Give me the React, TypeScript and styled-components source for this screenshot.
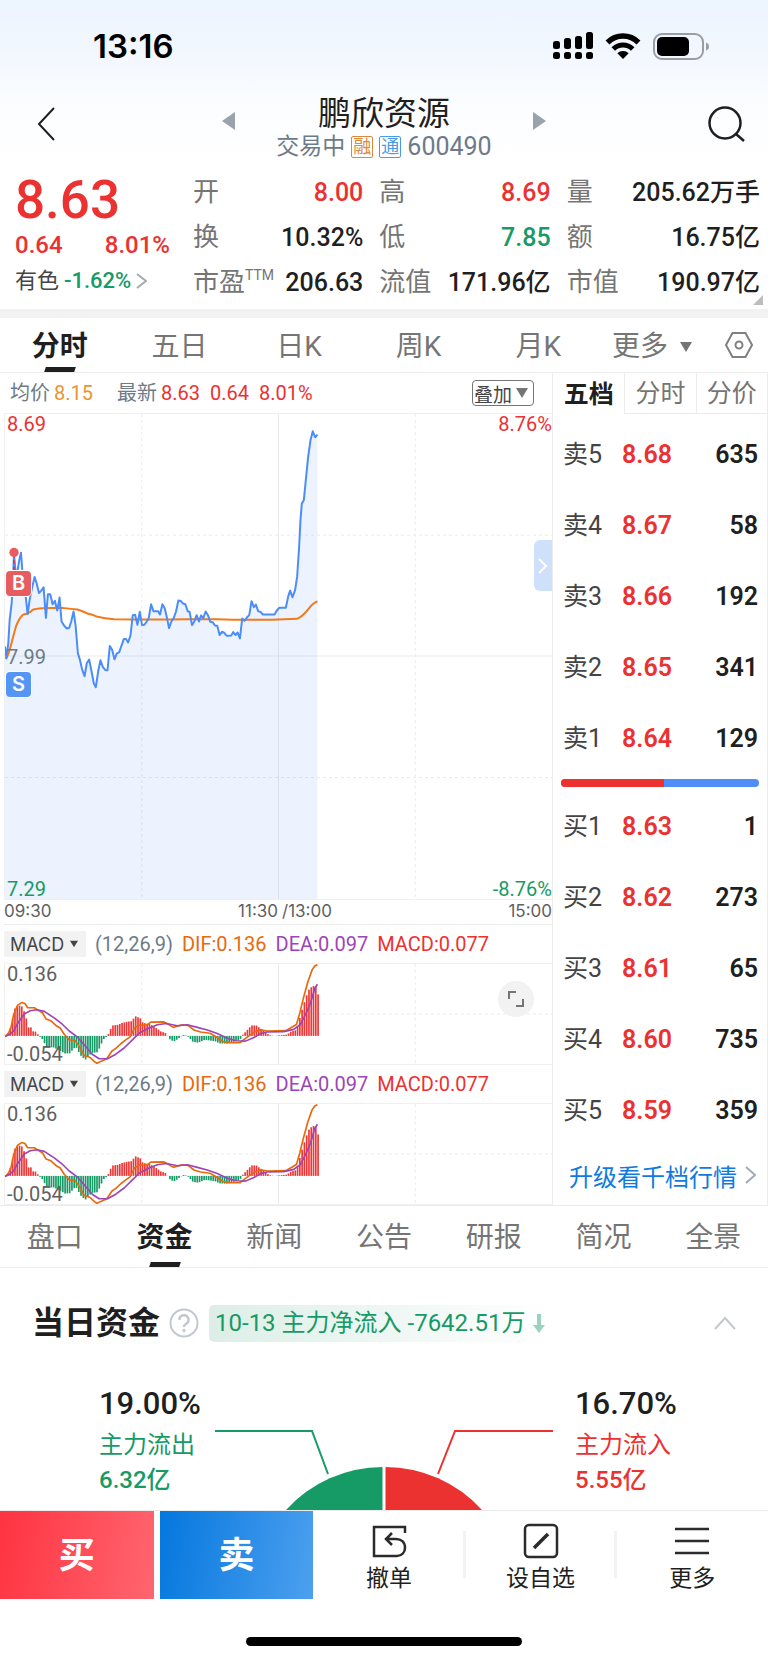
import React from 'react';
import styled, { createGlobalStyle, css } from 'styled-components';

const color = {
  ink: '#1f1f1f',
  text: '#444444',
  muted: '#757575',
  slate: '#6d7b88',
  red: '#ec3131',
  green: '#169a66',
  blue: '#0f7be0',
  line: '#ececec',
};

const tones = { ink: color.ink, red: color.red, green: color.green };
type Tone = keyof typeof tones;

const Global = createGlobalStyle`
  *, *::before, *::after { box-sizing: border-box; }
  body {
    margin: 0;
    background: #fff;
    color: ${color.ink};
    font-family: Roboto, "Noto Sans CJK SC", sans-serif;
  }
  h1, h2, p, dl, dd { margin: 0; font-weight: 400; }
  button, select {
    margin: 0;
    padding: 0;
    border: 0;
    background: none;
    color: inherit;
    font: inherit;
    cursor: pointer;
  }
  a { color: inherit; text-decoration: none; }
  svg { display: block; flex: none; }
`;

const Page = styled.div`
  width: 100%;
  overflow: hidden;
`;

/* ---------- status bar and header ---------- */

const Top = styled.div`
  background: linear-gradient(#edf5fe 0, #f2f7fe 50px, #fcfdff 110px, #fff 160px);
`;

const StatusBar = styled.div`
  display: flex;
  align-items: center;
  justify-content: space-between;
  height: 92px;
  padding: 0 58px 0 93px;
  color: #000;
`;

const Clock = styled.time`
  font: 600 33px/40px Inter, sans-serif;
`;

const StatusIcons = styled.div`
  display: flex;
  align-items: center;
  gap: 12px;
`;

const Header = styled.header`
  display: grid;
  grid-template-columns: 1fr 324px 1fr;
  align-items: center;
  padding: 0 22px 8px;
`;

const IconButton = styled.button<{ $end?: boolean }>`
  display: flex;
  align-items: center;
  justify-content: center;
  width: ${(p) => (p.$end ? 38 : 48)}px;
  height: 48px;
  padding-bottom: 4px;
  justify-self: ${(p) => (p.$end ? 'end' : 'start')};
`;

const Switcher = styled.div`
  display: flex;
  align-items: center;
  justify-content: space-between;
`;

const StepButton = styled.button`
  padding-bottom: 10px;
`;

const TitleBlock = styled.div`
  display: flex;
  flex-direction: column;
  align-items: center;
  padding-top: 2px;
`;

const StockName = styled.h1`
  font-size: 33px;
  line-height: 40px;
`;

const StockMeta = styled.p`
  display: flex;
  align-items: center;
  gap: 6px;
  font-size: 25px;
  line-height: 26px;
  color: ${color.slate};
`;

const State = styled.span`
  font-size: 23px;
`;

const Badge = styled.span<{ $color: string }>`
  width: 22px;
  height: 22px;
  border: 1px solid ${(p) => p.$color};
  border-radius: 2px;
  background: #fff;
  color: ${(p) => p.$color};
  font-size: 18px;
  line-height: 19px;
  text-align: center;
`;

/* ---------- quote ---------- */

const Quote = styled.section`
  position: relative;
  display: flex;
  padding: 0 8px 4px 15px;
  border-bottom: 9px solid #f2f2f2;
`;

const Latest = styled.div`
  width: 178px;
  padding-top: 2px;
`;

const Price = styled.p`
  font-size: 53px;
  font-weight: 500;
  line-height: 60px;
  color: ${color.red};
`;

const Change = styled.p`
  display: flex;
  justify-content: space-between;
  width: 155px;
  font-size: 24px;
  font-weight: 500;
  line-height: 30px;
  color: ${color.red};
`;

const Sector = styled.a`
  display: flex;
  align-items: center;
  gap: 5px;
  height: 42px;
  font-size: 22px;
  line-height: 30px;
  color: ${color.text};
`;

const SectorChange = styled.span`
  font-weight: 500;
  color: ${color.green};
`;

const Stats = styled.dl`
  flex: 1;
  display: grid;
  grid-template-columns: 170fr 171fr 193fr;
  column-gap: 16px;
  padding-top: 2px;
`;

const Stat = styled.div`
  display: flex;
  justify-content: space-between;
  height: 45px;
  font-size: 25px;
  line-height: 45px;
  white-space: nowrap;
`;

const StatLabel = styled.dt`
  display: flex;
  font-size: 26px;
  color: ${color.muted};
`;

const Superscript = styled.small`
  font-size: 14px;
  line-height: 30px;
`;

const StatValue = styled.dd<{ $tone: Tone }>`
  font-weight: 500;
  color: ${(p) => tones[p.$tone]};
`;

const Corner = styled.svg`
  position: absolute;
  right: 5px;
  bottom: 4px;
`;

/* ---------- tab strips ---------- */

const TabStrip = styled.nav`
  display: flex;
  border-bottom: 1px solid ${color.line};
`;

const Tab = styled.button<{ $active?: boolean; $tall?: boolean }>`
  position: relative;
  flex: 1 1 0;
  height: ${(p) => (p.$tall ? 61 : 54)}px;
  padding-top: ${(p) => (p.$tall ? 2 : 4)}px;
  font-size: 28px;
  line-height: 40px;
  color: ${color.muted};
  ${(p) =>
    p.$active &&
    css`
      color: ${color.ink};
      font-weight: 700;
      &::after {
        content: '';
        position: absolute;
        left: 50%;
        bottom: 0;
        width: 30px;
        height: 5px;
        margin-left: -15px;
        background: ${color.ink};
        transform: skewX(-18deg);
      }
    `}
`;

const MoreTab = styled(Tab)`
  display: flex;
  flex: 0 0 112px;
  align-items: center;
  gap: 12px;
  padding-left: 14px;
`;

const SettingsButton = styled(IconButton)`
  width: 58px;
  height: 54px;
  padding-bottom: 0;
`;

/* ---------- chart panel ---------- */

const Market = styled.section`
  display: flex;
  border-bottom: 1px solid ${color.line};
`;

const Charts = styled.div`
  position: relative;
  flex: 1;
  min-width: 0;
  padding-left: 4px;
`;

const InfoRow = styled.div`
  display: flex;
  align-items: center;
  height: 40px;
  padding: 0 18px 0 6px;
  gap: 10px;
  font-size: 20px;
  line-height: 30px;
  color: ${color.red};
`;

const InfoGroup = styled.span<{ $color?: string }>`
  display: flex;
  gap: 4px;
  margin-right: ${(p) => (p.$color ? 14 : 0)}px;
  color: ${(p) => p.$color ?? 'inherit'};
`;

const InfoLabel = styled.span`
  color: ${color.slate};
`;

const SelectBox = styled.span<{ $outlined?: boolean }>`
  position: relative;
  display: flex;
  align-items: center;
  flex: none;
  width: ${(p) => (p.$outlined ? 62 : 82)}px;
  height: 26px;
  margin-left: ${(p) => (p.$outlined ? 'auto' : 0)};
  border: ${(p) => (p.$outlined ? `1px solid ${color.muted}` : 0)};
  border-radius: ${(p) => (p.$outlined ? 4 : 0)}px;
  background: ${(p) => (p.$outlined ? '#fff' : '#f2f2f2')};
  color: ${color.text};
  svg {
    position: absolute;
    right: ${(p) => (p.$outlined ? 5 : 8)}px;
    pointer-events: none;
  }
`;

const Select = styled.select<{ $latin?: boolean }>`
  appearance: none;
  width: 100%;
  height: 100%;
  padding-left: ${(p) => (p.$latin ? 6 : 1)}px;
  font-family: ${(p) => (p.$latin ? 'Inter, sans-serif' : 'inherit')};
  font-size: ${(p) => (p.$latin ? 18 : 19)}px;
`;

const Plot = styled.div<{ $height: number }>`
  position: relative;
  height: ${(p) => p.$height}px;
  border: solid #f0f0f0;
  border-width: 1px 0 1px 1px;
  > svg {
    width: 100%;
    height: 100%;
  }
`;

const AxisLabel = styled.span<{ $place: 'tl' | 'tr' | 'ml' | 'bl' | 'br'; $color?: string }>`
  position: absolute;
  font-size: 20px;
  line-height: 20px;
  color: ${(p) => p.$color ?? '#606060'};
  ${(p) => (p.$place[1] === 'l' ? 'left: 2px;' : 'right: 0;')}
  ${(p) => ({ t: 'top: 0;', m: 'top: 50%; margin-top: -10px;', b: 'bottom: 0;' })[p.$place[0] as 't' | 'm' | 'b']}
`;

const TradeMark = styled.span<{ $buy?: boolean }>`
  position: absolute;
  left: 1px;
  top: ${(p) => (p.$buy ? 157 : 258)}px;
  width: 25px;
  height: 25px;
  border-radius: 4px;
  box-shadow: 0 0 0 1px #fff;
  background: ${(p) => (p.$buy ? '#e65c60' : '#5596f5')};
  color: #fff;
  font: 600 20px/25px Inter, sans-serif;
  text-align: center;
`;

const SideHandle = styled.button`
  position: absolute;
  right: 0;
  top: 126px;
  display: flex;
  align-items: center;
  justify-content: center;
  width: 18px;
  height: 51px;
  border-radius: 6px 0 0 6px;
  background: #cfe0fb;
`;

const TimeAxis = styled.div`
  display: grid;
  grid-template-columns: 1fr 1fr;
  height: 25px;
  border-bottom: 1px solid ${color.line};
  font: 17px/23px Inter, sans-serif;
  color: #606060;
`;

const Session = styled.div`
  display: flex;
  justify-content: space-between;
  &:last-child {
    padding-left: 4px;
  }
`;

const IndicatorRow = styled.div`
  display: flex;
  align-items: center;
  gap: 9px;
  height: 38px;
  font-size: 20px;
  white-space: nowrap;
`;

const Reading = styled.span<{ $color: string }>`
  color: ${(p) => p.$color};
`;

const ExpandButton = styled.button`
  position: absolute;
  right: 18px;
  top: 17px;
  display: flex;
  align-items: center;
  justify-content: center;
  width: 36px;
  height: 36px;
  border-radius: 50%;
  background: #f2f2f2;
`;

/* ---------- order book ---------- */

const Book = styled.aside`
  width: 216px;
  flex: none;
  border: solid ${color.line};
  border-width: 0 1px;
`;

const BookTabs = styled.div`
  display: grid;
  grid-template-columns: 1fr 1fr 1fr;
  height: 41px;
  margin-bottom: 5px;
`;

const BookTab = styled.button<{ $active?: boolean }>`
  padding-top: 2px;
  font-size: 25px;
  line-height: 36px;
  color: ${(p) => (p.$active ? color.ink : color.muted)};
  font-weight: ${(p) => (p.$active ? 700 : 400)};
  border: solid ${color.line};
  border-width: ${(p) => (p.$active ? 0 : '0 0 1px 1px')};
`;

const BookTable = styled.table`
  width: 100%;
  border-collapse: collapse;
  font-size: 25px;
  line-height: 36px;
`;

const Level = styled.th`
  width: 69px;
  height: 71px;
  padding: 0 0 0 10px;
  font-weight: 400;
  text-align: left;
  color: ${color.text};
`;

const BookPrice = styled.td`
  padding: 0;
  font-weight: 600;
  color: ${color.red};
`;

const Volume = styled.td`
  padding: 0 9px 0 0;
  font-weight: 600;
  text-align: right;
`;

const Balance = styled.div`
  display: flex;
  height: 8px;
  margin: 5px 8px 4px;
  border-radius: 4px;
  overflow: hidden;
  background: #4f8df9;
`;

const BalanceBuy = styled.span`
  width: 52%;
  background: ${color.red};
`;

const DepthLink = styled.a`
  display: flex;
  align-items: center;
  justify-content: space-between;
  height: 58px;
  padding: 0 11px 0 16px;
  font-size: 24px;
  white-space: nowrap;
  color: ${color.blue};
`;

/* ---------- funds ---------- */

const FundsHeader = styled.div`
  display: flex;
  align-items: center;
  height: 110px;
  padding: 0 32px 0 32px;
`;

const FundsTitle = styled.h2`
  margin-right: 9px;
  font-size: 32px;
  font-weight: 700;
  line-height: 40px;
`;

const FundsTag = styled.p`
  display: flex;
  align-items: center;
  gap: 8px;
  height: 37px;
  margin-left: 10px;
  padding: 0 6px;
  border-radius: 5px;
  background: linear-gradient(90deg, #dceee7, #fff);
  font-size: 24px;
  line-height: 32px;
  color: ${color.green};
`;

const Collapse = styled.button`
  margin-left: auto;
  padding: 10px 0;
`;

const Flow = styled.div`
  display: flex;
  justify-content: center;
  height: 132px;
  padding-top: 6px;
`;

const FlowSide = styled.div<{ $tone: Tone }>`
  width: 116px;
  color: ${(p) => tones[p.$tone]};
  font-size: 24px;
  line-height: 35px;
  white-space: nowrap;
  &:last-child {
    width: 94px;
    margin-left: 22px;
  }
`;

const FlowPercent = styled.p`
  font-size: 31px;
  font-weight: 500;
  line-height: 40px;
  color: ${color.ink};
  margin-bottom: 4px;
`;

const FlowAmount = styled.p`
  font-weight: 500;
`;

const FlowChart = styled.svg`
  align-self: flex-end;
`;

/* ---------- bottom bar ---------- */

const BottomBar = styled.footer`
  border-top: 1px solid ${color.line};
  background: #fff;
`;

const Actions = styled.div`
  display: flex;
  align-items: center;
  height: 88px;
`;

const TradeButton = styled.button<{ $sell?: boolean }>`
  width: 20%;
  height: 100%;
  margin-left: ${(p) => (p.$sell ? 6 : 0)}px;
  padding-top: 2px;
  background: ${(p) =>
    p.$sell ? 'linear-gradient(100deg, #0477de, #4da0ef)' : 'linear-gradient(100deg, #ff3341, #ff6670)'};
  color: #fff;
  font-size: 36px;
  font-weight: 700;
  line-height: 48px;
`;

const ActionButton = styled.button`
  position: relative;
  display: flex;
  flex: 1 1 0;
  flex-direction: column;
  align-items: center;
  gap: 3px;
  height: 100%;
  padding-top: 12px;
  font-size: 23px;
  line-height: 34px;
  & + &::before {
    content: '';
    position: absolute;
    left: -2px;
    top: 20px;
    width: 3px;
    height: 47px;
    background: #f2f2f2;
  }
`;

const HomeIndicator = styled.div`
  width: 36%;
  height: 9px;
  margin: 38px auto 15px;
  border-radius: 5px;
  background: #000;
`;

/* ---------- data ---------- */

type StatItem = { label: string; sup?: string; value: string; tone?: Tone };

const stats: StatItem[] = [
  { label: '开', value: '8.00', tone: 'red' },
  { label: '高', value: '8.69', tone: 'red' },
  { label: '量', value: '205.62万手' },
  { label: '换', value: '10.32%' },
  { label: '低', value: '7.85', tone: 'green' },
  { label: '额', value: '16.75亿' },
  { label: '市盈', sup: 'TTM', value: '206.63' },
  { label: '流值', value: '171.96亿' },
  { label: '市值', value: '190.97亿' },
];

const sells = [
  ['卖5', '8.68', '635'],
  ['卖4', '8.67', '58'],
  ['卖3', '8.66', '192'],
  ['卖2', '8.65', '341'],
  ['卖1', '8.64', '129'],
];

const buys = [
  ['买1', '8.63', '1'],
  ['买2', '8.62', '273'],
  ['买3', '8.61', '65'],
  ['买4', '8.60', '735'],
  ['买5', '8.59', '359'],
];

const pricePoints =
  '0,700 4,735 10,690 14,620 20,570 24,500 27,420 32,480 38,470 43,440 48,418 52,470 60,530 68,603 74,560 82,520 89,491 95,510 102,539 109,532 116,522 123,614 129,543 136,543 143,573 150,563 157,592 164,553 170,625 178,638 186,646 193,644 199,625 206,595 212,635 219,720 225,740 232,770 239,790 246,750 253,740 260,775 267,812 273,823 280,775 287,742 294,762 301,771 308,772 315,699 322,710 329,739 336,721 343,718 350,698 357,678 364,678 370,688 377,668 384,606 391,605 398,635 405,596 412,636 419,635 426,625 432,615 439,573 446,594 460,594 466,604 473,573 480,585 487,615 493,645 500,625 507,615 514,595 521,562 528,563 535,571 542,573 549,594 555,596 562,636 569,625 576,606 583,625 589,607 596,615 603,595 610,606 617,626 624,627 631,637 638,638 645,666 652,656 659,659 666,668 680,667 686,657 693,666 699,658 706,676 713,616 720,623 727,613 734,606 741,564 748,582 754,574 761,594 768,596 775,604 810,604 817,592 824,584 844,584 851,550 857,532 864,552 872,530 878,490 884,400 888,320 892,270 898,260 904,200 911,130 918,80 925,52 932,70 939,62';

const averagePath =
  'M2,738 C14,725 18,690 33,640 C40,622 46,612 54,605 C66,600 74,602 83,590 C100,584 145,584 173,584 Q200,588 218,589 Q232,594 248,601 Q262,604 278,611 Q300,616 328,618 L398,619 L488,619 L548,618 L638,618 L688,620 L800,620 L878,617 C895,611 905,597 918,580 Q930,567 939,565';

const barProfile: number[][] = [
  [0, 0], [10, 12], [18, 40], [26, 82], [33, 90], [46, 94], [54, 78], [61, 56], [68, 26], [76, 26], [82, 14],
  [90, 13], [98, 2], [104, -4], [112, -12], [122, -35], [143, -35], [163, -45], [178, -54], [194, -53],
  [203, -38], [212, -36], [225, -60], [239, -73], [258, -52], [276, -50], [286, -27], [294, -10], [306, 0],
  [314, 20], [322, 32], [338, 34], [350, 40], [368, 44], [376, 44], [390, 60], [404, 54], [412, 40], [433, 36],
  [446, 28], [458, 20], [468, 12], [478, 11], [486, 0], [496, -14], [508, -16], [524, -4], [533, 3], [543, 1],
  [550, -4], [562, -18], [578, -21], [598, -12], [628, -16], [643, -23], [668, -24], [688, -17], [704, -12],
  [712, 3], [722, 14], [738, 32], [753, 32], [766, 22], [773, 18], [783, 8], [794, 2], [808, 0], [823, 2],
  [846, 4], [854, 12], [873, 18], [880, 40], [888, 72], [898, 105], [906, 130], [913, 146], [925, 153],
  [932, 150], [939, 125],
];

const heightAt = (x: number) => {
  const next = barProfile.findIndex((p) => p[0] >= x);
  if (next < 1) return barProfile[0][1];
  const [x0, h0] = barProfile[next - 1];
  const [x1, h1] = barProfile[next];
  return h0 + ((h1 - h0) * (x - x0)) / (x1 - x0);
};

const macdBars = Array.from({ length: 138 }, (_, i) => {
  const x = i * 6.85;
  return { x, h: heightAt(x) };
});

const difPoints =
  '0,222 10,212 18,195 26,155 38,126 50,118 60,121 68,134 88,134 100,142 113,150 123,168 138,174 153,188 166,196 178,215 193,232 210,233 223,252 238,280 256,286 268,298 276,304 288,298 306,290 321,267 333,258 348,244 363,232 376,223 390,195 403,187 428,186 438,178 478,177 488,183 506,194 518,190 533,186 550,188 568,202 588,208 616,212 638,225 656,238 678,241 706,241 720,230 733,220 753,207 768,201 788,205 844,204 858,196 876,185 886,150 898,100 910,55 923,18 931,6 939,2';

const deaPoints =
  '0,222 13,216 26,205 38,182 58,153 76,143 96,140 118,145 148,165 173,185 193,205 216,222 238,247 263,277 283,290 308,290 333,276 358,257 383,232 403,212 428,198 458,186 485,182 518,189 548,186 578,194 608,202 638,213 668,227 693,235 723,236 748,225 768,213 788,208 838,207 868,200 888,185 903,155 918,120 931,75 939,62';

/* ---------- pieces ---------- */

const Grid = ({ height, rows }: { height: number; rows: number[] }) => (
  <g stroke="#ebebeb" strokeWidth="1">
    <path
      d={`M411,0V${height}M1233,0V${height}${rows.map((y) => `M0,${y}H1644`).join('')}`}
      strokeDasharray="3 3"
      vectorEffect="non-scaling-stroke"
    />
    <path d={`M822,0V${height}`} vectorEffect="non-scaling-stroke" />
  </g>
);

const Chevron = ({ stroke = '#a3abb5', d = 'M1 1 L10 9 L1 17', w = 11, h = 18 }) => (
  <svg width={w} height={h} fill="none" stroke={stroke} strokeWidth="2">
    <path d={d} />
  </svg>
);

const Down = ({ size = 12, fill = color.text }) => (
  <svg width={size} height={size} viewBox="0 0 12 12" fill={fill}>
    <path d="M0 1H12L6 11Z" />
  </svg>
);

const Levels = ({ rows, caption }: { rows: string[][]; caption: string }) => (
  <BookTable aria-label={caption}>
    <tbody>
      {rows.map(([level, price, volume]) => (
        <tr key={level}>
          <Level scope="row">{level}</Level>
          <BookPrice>{price}</BookPrice>
          <Volume>{volume}</Volume>
        </tr>
      ))}
    </tbody>
  </BookTable>
);

const Macd = ({ name, expandable }: { name: string; expandable?: boolean }) => (
  <>
    <IndicatorRow>
      <SelectBox>
        <Select $latin aria-label={name} defaultValue="MACD">
          <option>MACD</option>
        </Select>
        <Down size={8} />
      </SelectBox>
      <Reading $color={color.slate}>(12,26,9)</Reading>
      <Reading $color="#e8690b">DIF:0.136</Reading>
      <Reading $color="#9c45b8">DEA:0.097</Reading>
      <Reading $color={color.red}>MACD:0.077</Reading>
    </IndicatorRow>
    <Plot $height={102}>
      <svg viewBox="0 0 1644 306" preserveAspectRatio="none" fill="none">
        <Grid height={306} rows={[153]} />
        {macdBars.map(({ x, h }) => (
          <rect
            key={x}
            x={x}
            y={h > 0 ? 220 - h : 220}
            width="5"
            height={Math.abs(h)}
            fill={h > 0 ? '#ee3636' : '#169a66'}
          />
        ))}
        <polyline points={difPoints} stroke="#e8690b" strokeWidth="5" strokeLinejoin="round" />
        <polyline points={deaPoints} stroke="#9c45b8" strokeWidth="5" strokeLinejoin="round" />
      </svg>
      <AxisLabel $place="tl">0.136</AxisLabel>
      <AxisLabel $place="bl">-0.054</AxisLabel>
      {expandable && (
        <ExpandButton aria-label="全屏">
          <svg width="16" height="16" fill="none" stroke="#757575" strokeWidth="2">
            <path d="M1 8V1H8M15 8V15H8" />
          </svg>
        </ExpandButton>
      )}
    </Plot>
  </>
);

export default function App() {
  return (
    <Page>
      <Global />
      <Top>
        <StatusBar>
          <Clock>13:16</Clock>
          <StatusIcons>
            <svg width="40" height="28">
              {[8, 11, 13, 17].map((h, i) => (
                <g key={h}>
                  <rect x={i * 11} y={17 - h} width="7" height={h} rx="2.5" />
                  <rect x={i * 11} y="20" width="7" height="7" rx="2.5" />
                </g>
              ))}
            </svg>
            <svg width="36" height="27" fill="none" stroke="#000">
              <path d="M2.5 9.5A22 22 0 0 1 33.5 9.5" strokeWidth="5.5" />
              <path d="M8.3 16A13.7 13.7 0 0 1 27.7 16" strokeWidth="5" />
              <path d="M18 26L12.3 20.3A8 8 0 0 1 23.7 20.3Z" fill="#000" stroke="none" />
            </svg>
            <svg width="57" height="27" fill="none">
              <rect x="1" y="1" width="49" height="25" rx="8" stroke="#9a9ea3" strokeWidth="2" />
              <rect x="4" y="4" width="32" height="19" rx="5" fill="#000" />
              <path d="M53 9.5Q56 10.5 56 13.5Q56 16.5 53 17.5Z" fill="#9a9ea3" />
            </svg>
          </StatusIcons>
        </StatusBar>
        <Header>
          <IconButton aria-label="返回">
            <Chevron stroke={color.ink} d="M17 1L2 17L17 33" w={18} h={34} />
          </IconButton>
          <Switcher>
            <StepButton aria-label="上一只">
              <svg width="13" height="18" fill="#9aa3ad">
                <path d="M13 0V18L0 9Z" />
              </svg>
            </StepButton>
            <TitleBlock>
              <StockName>鹏欣资源</StockName>
              <StockMeta>
                <State>交易中</State>
                <Badge $color="#d98a3d">融</Badge>
                <Badge $color="#4a9be6">通</Badge>
                <span>600490</span>
              </StockMeta>
            </TitleBlock>
            <StepButton aria-label="下一只">
              <svg width="13" height="18" fill="#9aa3ad">
                <path d="M0 0V18L13 9Z" />
              </svg>
            </StepButton>
          </Switcher>
          <IconButton $end aria-label="搜索">
            <svg width="38" height="36" fill="none" stroke={color.ink} strokeWidth="2.5">
              <circle cx="17" cy="17" r="15.5" />
              <path d="M28 28L36 35" />
            </svg>
          </IconButton>
        </Header>
      </Top>

      <Quote>
        <Latest>
          <Price>8.63</Price>
          <Change>
            <span>0.64</span>
            <span>8.01%</span>
          </Change>
          <Sector href="#sector">
            <span>有色</span>
            <SectorChange>-1.62%</SectorChange>
            <Chevron d="M1 1L10 8L1 15" h={16} />
          </Sector>
        </Latest>
        <Stats>
          {stats.map((s) => (
            <Stat key={s.label}>
              <StatLabel>
                {s.label}
                {s.sup && <Superscript>{s.sup}</Superscript>}
              </StatLabel>
              <StatValue $tone={s.tone ?? 'ink'}>{s.value}</StatValue>
            </Stat>
          ))}
        </Stats>
        <Corner width="10" height="10" fill="#bdbdbd">
          <path d="M10 0V10H0Z" />
        </Corner>
      </Quote>

      <TabStrip aria-label="周期">
        {['分时', '五日', '日K', '周K', '月K'].map((t, i) => (
          <Tab key={t} $active={i === 0}>
            {t}
          </Tab>
        ))}
        <MoreTab aria-haspopup="menu">
          更多
          <Down fill={color.muted} />
        </MoreTab>
        <SettingsButton aria-label="设置">
          <svg width="28" height="26" fill="none" stroke="#808080" strokeWidth="2">
            <path d="M1 13L7.5 1H20.5L27 13L20.5 25H7.5Z" />
            <circle cx="14" cy="13" r="3.5" />
          </svg>
        </SettingsButton>
      </TabStrip>

      <Market>
        <Charts>
          <InfoRow>
            <InfoGroup $color="#ea9433">
              <InfoLabel>均价</InfoLabel>
              <span>8.15</span>
            </InfoGroup>
            <InfoGroup>
              <InfoLabel>最新</InfoLabel>
              <span>8.63</span>
            </InfoGroup>
            <span>0.64</span>
            <span>8.01%</span>
            <SelectBox $outlined>
              <Select aria-label="叠加" defaultValue="叠加">
                <option>叠加</option>
              </Select>
              <Down fill={color.muted} />
            </SelectBox>
          </InfoRow>
          <Plot $height={487}>
            <svg viewBox="0 0 1644 1461" preserveAspectRatio="none" fill="none">
              <Grid height={1461} rows={[365, 1095]} />
              <path d="M0,729H1644" stroke="#ebebeb" vectorEffect="non-scaling-stroke" />
              <polygon points={`0,1461 ${pricePoints} 939,1461`} fill="#4f8df9" fillOpacity="0.11" />
              <path d={averagePath} stroke="#f27a1a" strokeWidth="6" />
              <polyline points={pricePoints} stroke="#4a8dfa" strokeWidth="6" strokeLinejoin="round" />
              <path d="M27,420V480" stroke={color.red} strokeWidth="5" strokeDasharray="12 8" />
              <circle cx="27" cy="417" r="14" fill="#e65c60" />
            </svg>
            <AxisLabel $place="tl" $color={color.red}>8.69</AxisLabel>
            <AxisLabel $place="tr" $color={color.red}>8.76%</AxisLabel>
            <AxisLabel $place="ml" $color={color.slate}>7.99</AxisLabel>
            <AxisLabel $place="bl" $color={color.green}>7.29</AxisLabel>
            <AxisLabel $place="br" $color={color.green}>-8.76%</AxisLabel>
            <TradeMark $buy>B</TradeMark>
            <TradeMark>S</TradeMark>
            <SideHandle aria-label="展开">
              <Chevron stroke="#fff" d="M1 1L8 8L1 15" w={10} h={16} />
            </SideHandle>
          </Plot>
          <TimeAxis>
            <Session>
              <span>09:30</span>
              <span>11:30</span>
            </Session>
            <Session>
              <span>/13:00</span>
              <span>15:00</span>
            </Session>
          </TimeAxis>
          <Macd name="副图一" expandable />
          <Macd name="副图二" />
        </Charts>

        <Book>
          <BookTabs>
            <BookTab $active>五档</BookTab>
            <BookTab>分时</BookTab>
            <BookTab>分价</BookTab>
          </BookTabs>
          <Levels rows={sells} caption="卖盘" />
          <Balance>
            <BalanceBuy />
          </Balance>
          <Levels rows={buys} caption="买盘" />
          <DepthLink href="#depth">
            升级看千档行情
            <Chevron />
          </DepthLink>
        </Book>
      </Market>

      <TabStrip aria-label="资讯">
        {['盘口', '资金', '新闻', '公告', '研报', '简况', '全景'].map((t, i) => (
          <Tab key={t} $tall $active={i === 1}>
            {t}
          </Tab>
        ))}
      </TabStrip>

      <section>
        <FundsHeader>
          <FundsTitle>当日资金</FundsTitle>
          <svg width="30" height="30" fill="none" stroke="#c3c8d0" strokeWidth="2">
            <circle cx="15" cy="15" r="13.5" />
            <path d="M10.5 12A4.5 4.5 0 1 1 17 15.8Q15 16.8 15 19" strokeWidth="2.5" />
            <circle cx="15" cy="22.5" r="0.7" />
          </svg>
          <FundsTag>
            <span>10-13 主力净流入 -7642.51万</span>
            <svg width="12" height="19" fill="#9ad3bd">
              <path d="M4 0H8V11H12L6 19L0 11H4Z" />
            </svg>
          </FundsTag>
          <Collapse aria-label="收起">
            <Chevron stroke="#c3c8d0" d="M1 13L11 2L21 13" w={22} h={14} />
          </Collapse>
        </FundsHeader>
        <Flow>
          <FlowSide $tone="green">
            <FlowPercent>19.00%</FlowPercent>
            <p>主力流出</p>
            <FlowAmount>6.32亿</FlowAmount>
          </FlowSide>
          <FlowChart width="338" height="80" fill="none" strokeWidth="2">
            <path d="M0 1H97L113 44" stroke={color.green} />
            <path d="M338 1H240L223 44" stroke={color.red} />
            <path d="M167.500 37A131 131 0 0 0 71 80H167.500Z" fill={color.green} />
            <path d="M170.500 37A131 131 0 0 1 267 80H170.500Z" fill={color.red} />
          </FlowChart>
          <FlowSide $tone="red">
            <FlowPercent>16.70%</FlowPercent>
            <p>主力流入</p>
            <FlowAmount>5.55亿</FlowAmount>
          </FlowSide>
        </Flow>
      </section>

      <BottomBar>
        <Actions>
          <TradeButton>买</TradeButton>
          <TradeButton $sell>卖</TradeButton>
          <ActionButton>
            <svg width="36" height="36" fill="none" stroke="#2b2b2b" strokeWidth="2.5">
              <path d="M34 10V4H3V33H26C31 33 34 29 34 25C34 19 30 16 25 16H15M21 10L15 16L21 22" />
            </svg>
            撤单
          </ActionButton>
          <ActionButton>
            <svg width="36" height="36" fill="none" stroke="#2b2b2b" strokeWidth="2.5">
              <rect x="2" y="2" width="32" height="32" rx="4" />
              <path d="M11 25L25 11" strokeWidth="3.5" />
            </svg>
            设自选
          </ActionButton>
          <ActionButton>
            <svg width="36" height="36" fill="none" stroke="#2b2b2b" strokeWidth="2.5">
              <path d="M1 6H35M1 18H35M1 30H35" />
            </svg>
            更多
          </ActionButton>
        </Actions>
        <HomeIndicator />
      </BottomBar>
    </Page>
  );
}
